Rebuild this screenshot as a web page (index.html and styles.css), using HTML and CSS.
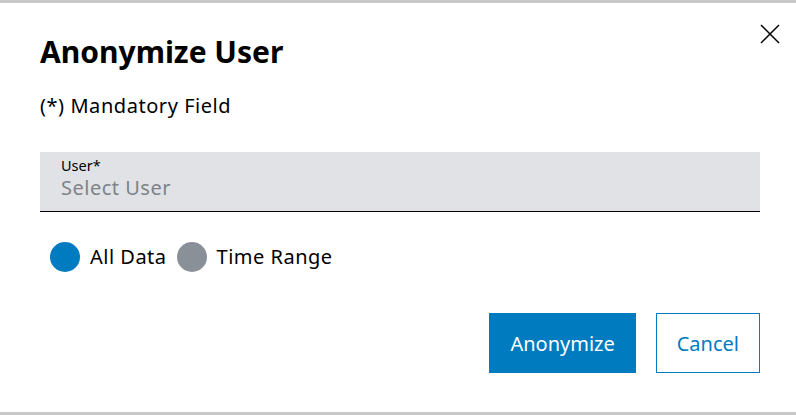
FILE: index.html
```html
<!DOCTYPE html>
<html lang="en">
<head>
    <meta charset="UTF-8">
    <meta name="viewport" content="width=device-width, initial-scale=1.0">
    <title>Anonymize User</title>
    <link rel="stylesheet" href="styles.css">
</head>
<body>

    <div class="dialog">
        <!-- Close button -->
        <button class="close-button" aria-label="Close">
            <svg width="20" height="20" viewBox="0 0 20 20">
                <path d="M1 1 L19 19 M19 1 L1 19" stroke="#000" stroke-width="1.5" fill="none"/>
            </svg>
        </button>

        <h1>Anonymize User</h1>
        <p class="mandatory">(*) Mandatory Field</p>

        <!-- User select -->
        <div class="select-field">
            <label for="user">User*</label>
            <div class="select-value" id="user">Select User</div>
        </div>

        <!-- Range options -->
        <div class="radio-group">
            <label class="radio">
                <span class="dot dot-active"></span>
                All Data
            </label>
            <label class="radio">
                <span class="dot"></span>
                Time Range
            </label>
        </div>

        <div class="button-group">
            <button class="primary-button">Anonymize</button>
            <button class="secondary-button">Cancel</button>
        </div>
    </div>

</body>
</html>
```

FILE: styles.css
```css
body {
    font-family: "Noto Sans", Arial, sans-serif;
    margin: 0;
    padding: 3px 0;
    background-color: #c8c8c8;
    color: #000;
}
.dialog {
    position: relative;
    height: 409px;
    box-sizing: border-box;
    background-color: white;
    padding: 29px 36px 0 40px;
}
.close-button {
    position: absolute;
    top: 21px;
    right: 16px;
    padding: 0;
    background: none;
    border: none;
    cursor: pointer;
}
.close-button svg {
    display: block;
}
h1 {
    margin: 0;
    font-size: 30px;
    line-height: 40px;
    font-weight: 700;
}
.mandatory {
    margin: 20px 0 0;
    font-size: 20px;
    line-height: 28px;
    letter-spacing: 0.55px;
}
.select-field {
    margin-top: 32px;
    height: 60px;
    background-color: #e0e2e5;
    border-bottom: 1px solid #000;
    padding: 3px 21px 0;
    box-sizing: border-box;
}
.select-field label {
    display: block;
    font-size: 14.5px;
    line-height: 20px;
}
.select-value {
    font-size: 20px;
    line-height: 26px;
    letter-spacing: 0.5px;
    color: #7d8389;
}
.radio-group {
    display: flex;
    gap: 10px;
    margin-top: 30px;
    margin-left: 10px;
}
.radio {
    display: flex;
    align-items: center;
    gap: 10px;
    font-size: 20px;
    line-height: 30px;
    letter-spacing: 0.5px;
}
.dot {
    width: 30px;
    height: 30px;
    border-radius: 50%;
    background-color: #8a9097;
}
.dot-active {
    background-color: #007bc0;
}
.button-group {
    display: flex;
    justify-content: flex-end;
    gap: 20px;
    margin-top: 41px;
}
button.primary-button,
button.secondary-button {
    height: 60px;
    padding: 0 20px;
    font-family: inherit;
    font-size: 20px;
    border: 1px solid #007bc0;
    border-radius: 0;
    cursor: pointer;
}
.primary-button {
    background-color: #007bc0;
    color: white;
}
.secondary-button {
    background-color: white;
    color: #007bc0;
}
```
